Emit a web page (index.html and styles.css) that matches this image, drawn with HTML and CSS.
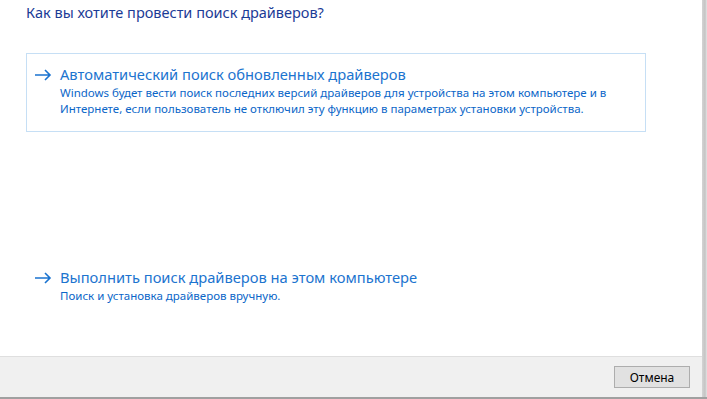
FILE: index.html
```html
<!DOCTYPE html>
<html lang="ru">
<head>
    <meta charset="UTF-8">
    <title>Обновление драйверов</title>
    <link rel="stylesheet" href="styles.css">
</head>
<body>
    <div class="frame">
        <div class="window">
            <div class="content">
                <h1 class="title">Как вы хотите провести поиск драйверов?</h1>
                <a class="option option-hover" href="#">
                    <svg class="arrow" width="18" height="12" viewBox="0 0 18 12">
                        <path d="M1 6 H16 M11 1 L16 6 L11 11" fill="none" stroke="currentColor" stroke-width="1.6"/>
                    </svg>
                    <div class="option-text">
                        <div class="option-head">Автоматический поиск обновленных драйверов</div>
                        <div class="option-desc">Windows будет вести поиск последних версий драйверов для устройства на этом компьютере и в Интернете, если пользователь не отключил эту функцию в параметрах установки устройства.</div>
                    </div>
                </a>
                <a class="option option-second" href="#">
                    <svg class="arrow" width="18" height="12" viewBox="0 0 18 12">
                        <path d="M1 6 H16 M11 1 L16 6 L11 11" fill="none" stroke="currentColor" stroke-width="1.6"/>
                    </svg>
                    <div class="option-text">
                        <div class="option-head">Выполнить поиск драйверов на этом компьютере</div>
                        <div class="option-desc">Поиск и установка драйверов вручную.</div>
                    </div>
                </a>
            </div>
            <div class="footer">
                <button class="btn" type="button">Отмена</button>
            </div>
        </div>
        <div class="edge"></div>
    </div>
</body>
</html>
```

FILE: styles.css
```css
body {
    margin: 0;
    font-family: "Noto Sans", "Open Sans", sans-serif;
    background: #fff;
}
.frame {
    display: flex;
    width: 707px;
    height: 399px;
    box-sizing: border-box;
    border-bottom: 2px solid #a0a0a0;
}
.window {
    flex: 1;
    display: flex;
    flex-direction: column;
}
.edge {
    width: 5px;
    background: linear-gradient(to right, #d4d4d4, #c4c4c4 60%, #e4e4e4);
}
.content {
    flex: 1;
    padding: 0 0 0 26px;
}
.title {
    margin: 0;
    padding-top: 2px;
    font-size: 14.5px;
    font-weight: normal;
    color: #1b3b96;
    line-height: 20px;
}
.option {
    display: flex;
    align-items: flex-start;
    width: 620px;
    box-sizing: border-box;
    border: 1px solid transparent;
    padding: 10px 8px 14px 7px;
    text-decoration: none;
    color: #1a73d0;
}
.option-hover {
    margin-top: 31px;
    border-color: #c6dff5;
}
.option-second {
    margin-top: 124px;
}
.arrow {
    flex: none;
    margin-top: 5px;
    margin-right: 8px;
}
.option-head {
    font-size: 14.7px;
    line-height: 20px;
    color: #1c74cf;
}
.option-desc {
    margin-top: 1px;
    font-size: 11.5px;
    line-height: 16px;
    color: #0b66c8;
}
.footer {
    height: 41px;
    background: #f0f0f0;
    border-top: 1px solid #dfdfdf;
    display: flex;
    justify-content: flex-end;
    align-items: flex-start;
    padding: 9px 12px 0 0;
    box-sizing: border-box;
}
.btn {
    width: 76px;
    height: 22px;
    background: #e1e1e1;
    border: 1px solid #adadad;
    font-family: inherit;
    font-size: 12px;
    color: #000;
    padding: 0;
}
```
